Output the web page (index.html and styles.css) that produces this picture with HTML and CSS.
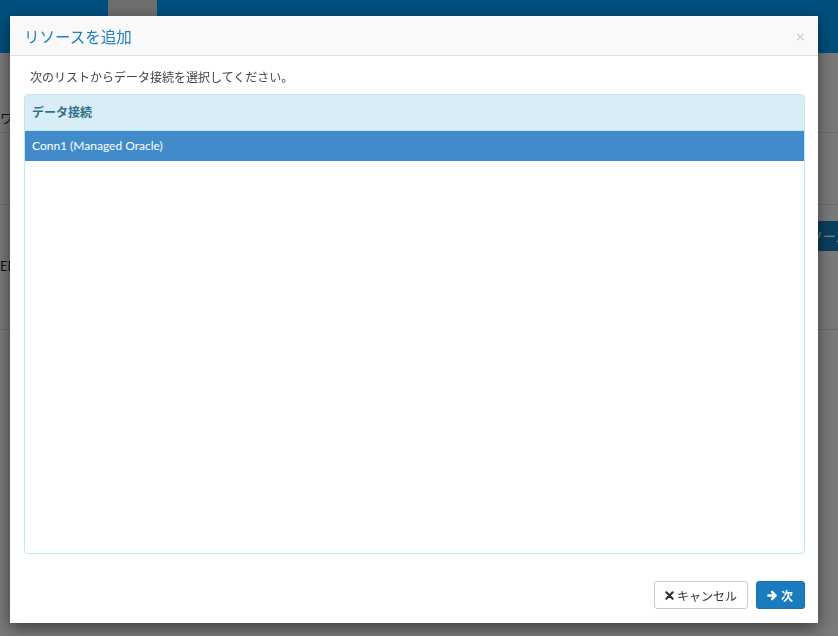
FILE: index.html
```html
<!DOCTYPE html>
<html lang="ja">
<head>
    <meta charset="UTF-8">
    <title>リソースを追加</title>
    <link rel="stylesheet" href="styles.css">
</head>
<body>
    <!-- 背景のページ -->
    <div class="page">
        <div class="topbar">
            <div class="topbar-tab"></div>
        </div>
        <div class="page-row row-1">
            <div class="sub-row"><span class="left-text">ワジ</span></div>
        </div>
        <div class="page-row row-2">
            <span class="left-text">EF</span>
            <span class="page-button">リソースを追加</span>
        </div>
    </div>

    <div class="backdrop"></div>

    <!-- モーダル -->
    <div class="modal">
        <div class="modal-header">
            <h4 class="modal-title">リソースを追加</h4>
            <span class="close">&times;</span>
        </div>
        <div class="modal-body">
            <p class="hint">次のリストからデータ接続を選択してください。</p>
            <div class="panel">
                <div class="panel-heading">データ接続</div>
                <div class="list">
                    <div class="list-item selected">Conn1 (Managed Oracle)</div>
                </div>
            </div>
        </div>
        <div class="modal-footer">
            <button class="btn btn-default">
                <svg class="icon" viewBox="0 0 10 10" width="9" height="9"><path d="M1.5 1.5 L8.5 8.5 M8.5 1.5 L1.5 8.5" stroke="#333" stroke-width="2.4" stroke-linecap="round"/></svg>キャンセル
            </button>
            <button class="btn btn-primary">
                <svg class="icon" viewBox="0 0 12 12" width="11" height="11"><path d="M1.5 6 H9 M5.5 2 L9.5 6 L5.5 10" fill="none" stroke="#fff" stroke-width="2.6" stroke-linecap="round" stroke-linejoin="round"/></svg>次
            </button>
        </div>
    </div>
</body>
</html>
```

FILE: styles.css
```css
html, body {
    margin: 0;
    padding: 0;
    height: 100%;
}
body {
    font-family: Lato, "Noto Sans CJK JP", sans-serif;
    font-size: 12px;
    color: #333;
    background: #f4f4f4;
    overflow: hidden;
}
.page {
    height: 100%;
}
.topbar {
    height: 53px;
    background: #009efc;
    position: relative;
}
.topbar-tab {
    position: absolute;
    left: 108px;
    top: 0;
    width: 49px;
    height: 53px;
    background: #dedede;
}
.page-row {
    border-bottom: 1px solid #d4d4d4;
    display: flex;
    align-items: flex-start;
    justify-content: space-between;
    overflow: hidden;
}
.row-1 {
    height: 151px;
}
.sub-row {
    height: 80px;
    width: 100%;
    border-bottom: 1px solid #d4d4d4;
    padding-top: 55px;
    box-sizing: border-box;
}
.row-2 {
    height: 124px;
}
.left-text {
    color: #222;
    font-size: 13px;
}
.row-2 .left-text {
    margin-top: 53px;
}
.page-button {
    margin-top: 16px;
    margin-right: -59px;
    background: #167ebe;
    color: #fff;
    height: 30px;
    line-height: 30px;
    padding: 0 10px;
    font-size: 13px;
    white-space: nowrap;
}
.backdrop {
    position: fixed;
    inset: 0;
    background: rgba(0, 0, 0, 0.5);
}
.modal {
    position: absolute;
    left: 10px;
    top: 16px;
    width: 808px;
    height: 607px;
    background: #fff;
    box-shadow: 0 5px 15px rgba(0, 0, 0, 0.5);
    display: flex;
    flex-direction: column;
}
.modal-header {
    height: 39px;
    background: #f9f9f9;
    border-bottom: 1px solid #e2e2e2;
    display: flex;
    align-items: center;
    justify-content: space-between;
    padding: 0 14px;
}
.modal-title {
    margin: 0;
    font-weight: normal;
    font-size: 15.5px;
    color: #1f7fc4;
}
.close {
    color: #c8c8c8;
    font-size: 16px;
    line-height: 1;
    margin-right: -1px;
}
.modal-body {
    padding: 0 13px 0 14px;
    flex: 1;
    display: flex;
    flex-direction: column;
}
.hint {
    margin: 13px 0 8px 6px;
    line-height: 17px;
    font-size: 12px;
    color: #444;
}
.panel {
    height: 458px;
    border: 1px solid #bce8f1;
    border-radius: 4px;
    overflow: hidden;
}
.panel-heading {
    height: 35px;
    line-height: 35px;
    background: #d9edf7;
    border-bottom: 1px solid #bce8f1;
    color: #31708f;
    font-weight: 600;
    padding-left: 7px;
}
.list-item {
    height: 30px;
    line-height: 30px;
    padding-left: 7px;
}
.list-item.selected {
    background: #428bca;
    color: #fff;
}
.modal-footer {
    height: 62px;
    display: flex;
    justify-content: flex-end;
    align-items: flex-start;
    gap: 8px;
    padding: 20px 13px 0 0;
    box-sizing: border-box;
}
.btn {
    font-family: inherit;
    font-size: 12px;
    height: 28px;
    border-radius: 3px;
    padding: 0 10px;
    display: flex;
    align-items: center;
    gap: 3px;
    cursor: pointer;
}
.btn-default {
    background: #fff;
    border: 1px solid #ccc;
    color: #333;
    width: 94px;
}
.btn-primary {
    background: #1a7bbf;
    border: 1px solid #1a72b0;
    color: #fff;
    font-weight: 600;
    width: 49px;
}
.icon {
    display: block;
}
```
